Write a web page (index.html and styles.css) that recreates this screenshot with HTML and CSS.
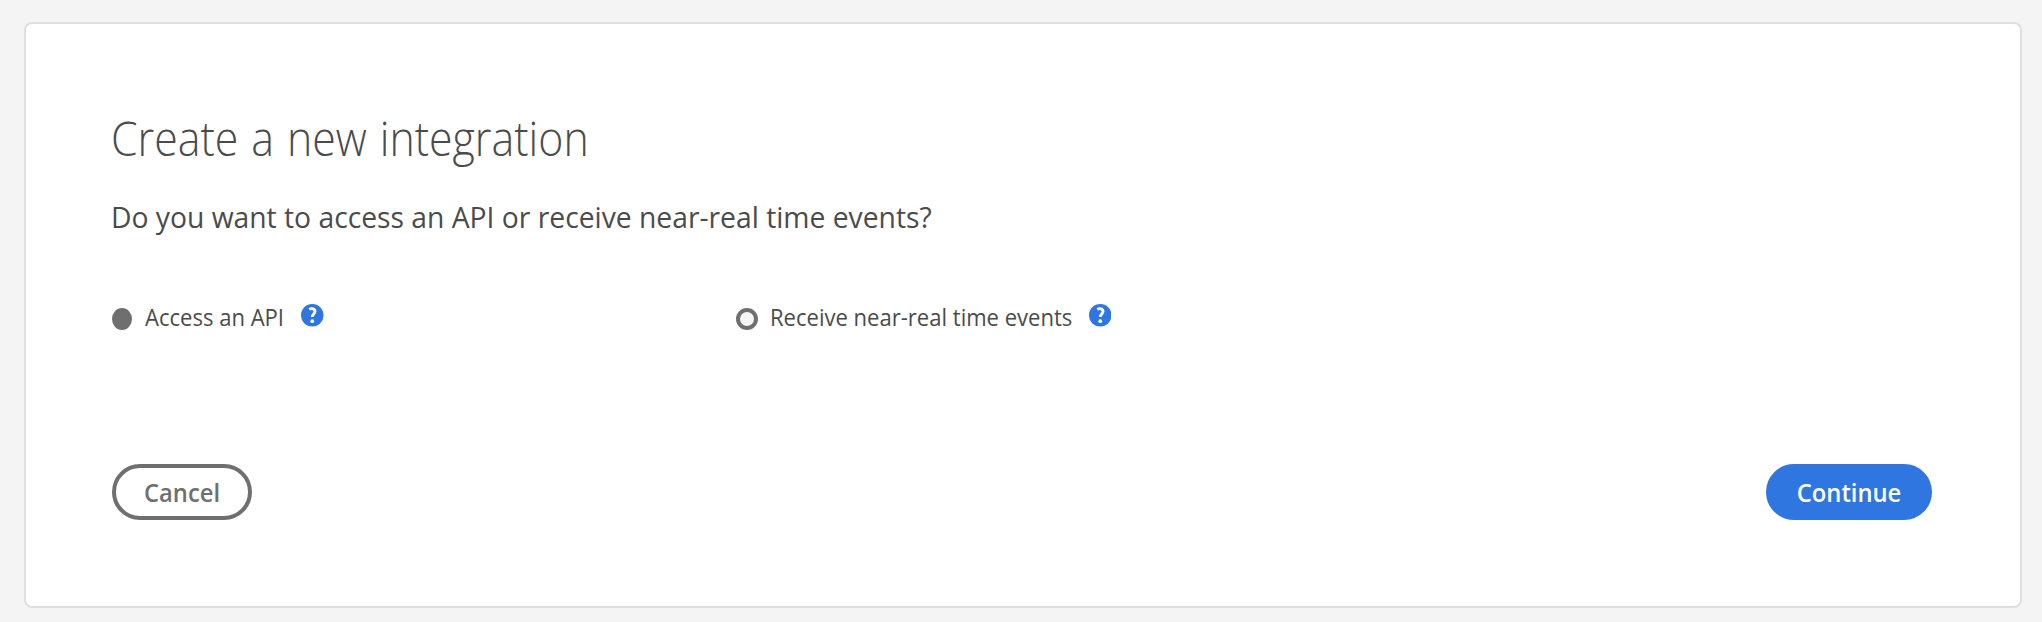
FILE: index.html
```html
<!DOCTYPE html>
<html lang="en">
<head>
<meta charset="utf-8">
<title>Create a new integration</title>
<link rel="stylesheet" href="styles.css">
</head>
<body>
<main class="card">
  <h1 class="title">Create a new integration</h1>
  <p class="question">Do you want to access an API or receive near-real time events?</p>
  <div class="options">
    <label class="option"><span class="radio radio-on"></span><span class="label label-api">Access an API</span>
      <svg class="help" viewBox="0 0 22 22"><circle cx="11" cy="11" r="11" fill="#2f76e0"/><path d="M8 5.2C10.5 3.9 13.7 4.4 13.7 7.2C13.7 9.7 11 9.9 11 12.8" fill="none" stroke="#fff" stroke-width="2.8"/><circle cx="11" cy="16.8" r="1.8" fill="#fff"/></svg></label>
    <label class="option"><span class="radio"></span><span class="label label-events">Receive near-real time events</span>
      <svg class="help" viewBox="0 0 22 22"><circle cx="11" cy="11" r="11" fill="#2f76e0"/><path d="M8 5.2C10.5 3.9 13.7 4.4 13.7 7.2C13.7 9.7 11 9.9 11 12.8" fill="none" stroke="#fff" stroke-width="2.8"/><circle cx="11" cy="16.8" r="1.8" fill="#fff"/></svg></label>
  </div>
  <div class="actions">
    <button class="button cancel"><span class="caption">Cancel</span></button>
    <button class="button continue"><span class="caption">Continue</span></button>
  </div>
</main>
</body>
</html>
```
FILE: styles.css
```css
* { box-sizing: border-box; }
body { margin: 0; height: 622px; padding: 22px 20px 14px 24px; background: #f4f4f4; color: #4b4b4b; font-family: "Open Sans", "Noto Sans", sans-serif; }
.card { height: 586px; width: 1998px; padding: 82px 88px 0 86px; background: #fff; border: 2px solid #dfdfdf; border-radius: 8px; }
.title { margin: 0 0 0 -1px; height: 64px; font-size: 48px; line-height: 64px; font-weight: 300; word-spacing: 2px; transform: scaleX(.893); transform-origin: 0 0; }
.question { margin: 26px 0 0 -1px; height: 40px; font-size: 30px; line-height: 41px; transform: scaleX(.942); transform-origin: 0 0; }
.options { display: grid; grid-template-columns: 624px 1fr; margin-top: 61px; }
.option { display: flex; height: 40px; font-size: 23.5px; }
.radio { flex: none; width: 22px; height: 22px; margin-top: 11px; border: 4.5px solid #6f6f6f; border-radius: 50%; background: #f5f5f5; }
.radio-on { width: 20px; background: #6f6f6f; }
.label { flex: none; margin-left: 12.5px; line-height: 41px; white-space: nowrap; transform: scaleX(.938); transform-origin: 0 0; }
.label-api { width: 140px; }
.label-events { width: 302.5px; margin-left: 11.5px; }
.help { flex: none; width: 22.5px; height: 22.5px; margin: 7px 0 0 16.5px; }
.actions { display: flex; justify-content: space-between; margin-top: 127px; }
.button { height: 56px; padding: 0; border-radius: 28px; font: 600 25px/48px "Open Sans", sans-serif; }
.cancel { width: 140px; border: 4px solid #6f6f6f; background: #fff; color: #6f6f6f; }
.continue { width: 166px; border: 4px solid #2f76e0; background: #2f76e0; color: #fff; }
.caption { display: inline-block; transform: scaleX(.95); }
```
